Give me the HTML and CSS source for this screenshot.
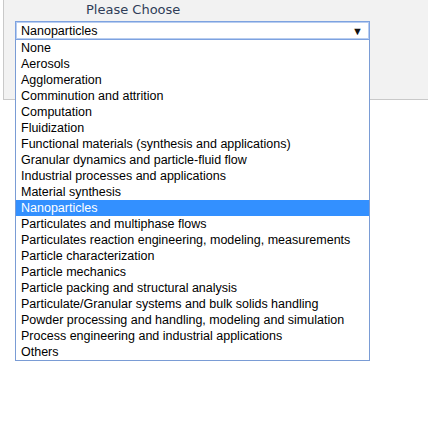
FILE: index.html
```html
<!DOCTYPE html>
<html>
<head>
<meta charset="utf-8">
<link rel="stylesheet" href="styles.css">
</head>
<body>
<div class="panel">
  <div class="label">Please Choose</div>
  <div class="select-wrap">
    <div class="select">
      <span class="value">Nanoparticles</span>
      <span class="arrow">&#9660;</span>
    </div>
    <ul class="list">
      <li>None</li>
      <li>Aerosols</li>
      <li>Agglomeration</li>
      <li>Comminution and attrition</li>
      <li>Computation</li>
      <li>Fluidization</li>
      <li>Functional materials (synthesis and applications)</li>
      <li>Granular dynamics and particle-fluid flow</li>
      <li>Industrial processes and applications</li>
      <li>Material synthesis</li>
      <li class="selected">Nanoparticles</li>
      <li>Particulates and multiphase flows</li>
      <li>Particulates reaction engineering, modeling, measurements</li>
      <li>Particle characterization</li>
      <li>Particle mechanics</li>
      <li>Particle packing and structural analysis</li>
      <li>Particulate/Granular systems and bulk solids handling</li>
      <li>Powder processing and handling, modeling and simulation</li>
      <li>Process engineering and industrial applications</li>
      <li>Others</li>
    </ul>
  </div>
</div>
</body>
</html>
```

FILE: styles.css
```css
html, body {
  margin: 0;
  padding: 0;
  background: #ffffff;
}
body {
  width: 428px;
  height: 425px;
  overflow: hidden;
  font-family: "Liberation Sans", Arial, sans-serif;
}
.panel {
  margin-left: 3px;
  height: 100px;
  box-sizing: border-box;
  background: #f2f2f2;
  border-left: 1px solid #c9c9c9;
  border-bottom: 1px solid #c9c9c9;
  padding-left: 11px;
}
.label {
  font-family: "DejaVu Sans", Verdana, sans-serif;
  font-size: 13px;
  color: #2f3d58;
  height: 21px;
  line-height: 19px;
  padding-left: 71px;
}
.select-wrap {
  position: relative;
  width: 355px;
}
.select {
  height: 19px;
  box-sizing: border-box;
  background: #ffffff;
  border: 1px solid #7da2e0;
  box-shadow: inset 0 0 0 1px #b8cdf0;
  display: flex;
  align-items: center;
  justify-content: space-between;
  padding: 0 6px 0 5px;
  font-size: 12.5px;
  color: #000;
}
.arrow {
  font-size: 11px;
  color: #111;
}
.list {
  position: absolute;
  left: 0;
  top: 19px;
  width: 355px;
  box-sizing: border-box;
  margin: 0;
  padding: 0;
  list-style: none;
  background: #ffffff;
  border: 1px solid #7a9cd5;
  border-top: none;
  font-size: 12.5px;
  color: #000;
}
.list li {
  height: 16px;
  line-height: 16px;
  padding-left: 5px;
  white-space: nowrap;
}
.list li.selected {
  background: #3390ff;
  color: #ffffff;
}
```
